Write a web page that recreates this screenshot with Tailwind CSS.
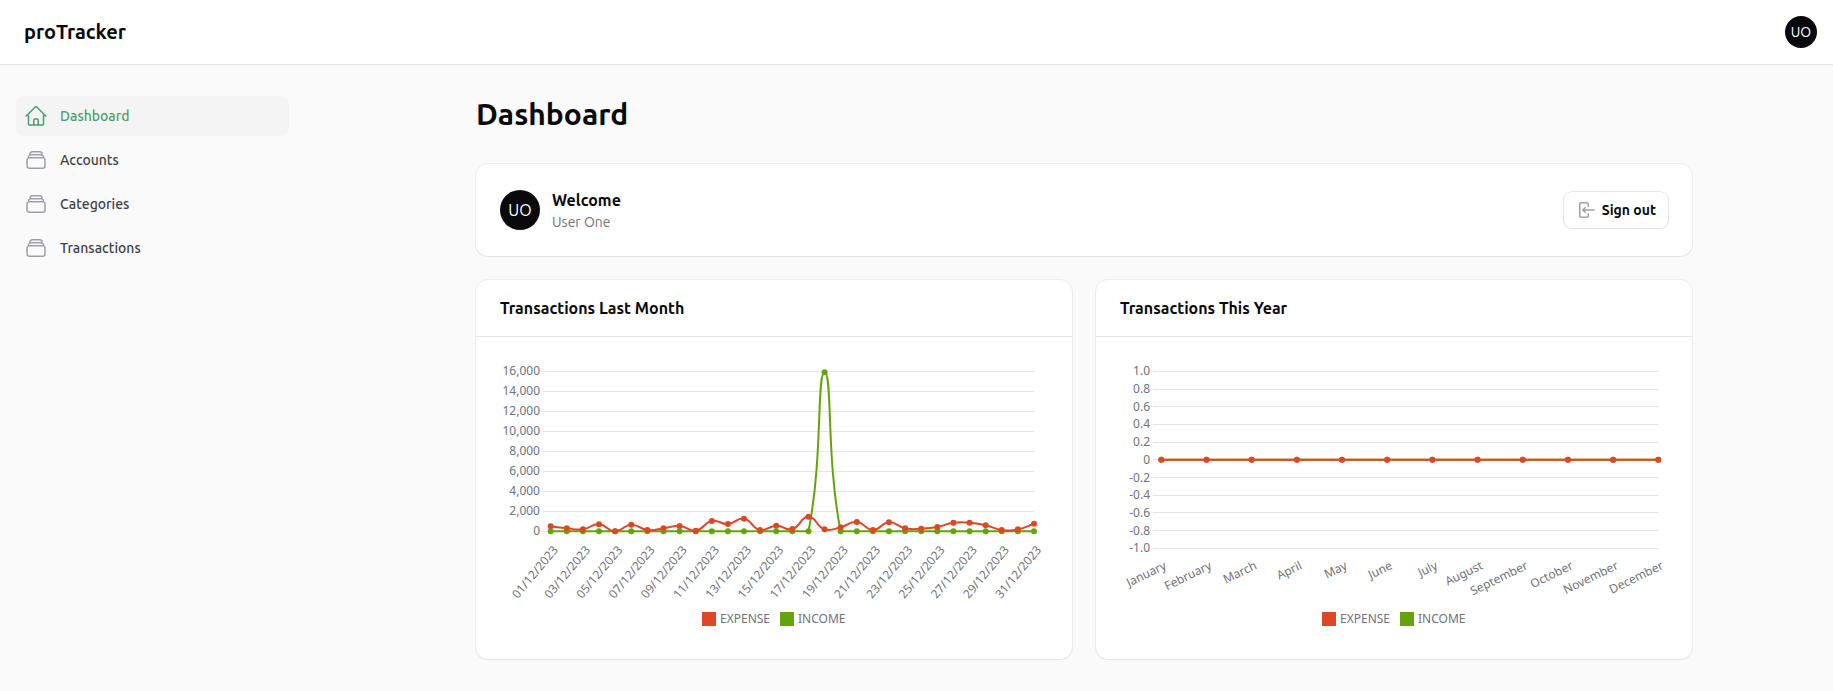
<!DOCTYPE html>
<html lang="en">
<head>
<meta charset="utf-8">
<meta name="viewport" content="width=device-width, initial-scale=1">
<title>Dashboard - proTracker</title>
<script src="https://cdn.jsdelivr.net/npm/@tailwindcss/browser@4"></script>
</head>
<body class="min-h-screen bg-zinc-50 font-['Ubuntu','Noto_Sans',sans-serif] text-zinc-950">

<header class="relative flex h-16 items-center justify-between bg-white pr-4 pl-6 shadow-xs ring-1 ring-zinc-950/5">
  <a href="#" class="text-xl font-bold">proTracker</a>
  <button type="button" aria-label="User menu" class="flex size-8 items-center justify-center rounded-full bg-zinc-950 text-sm text-white">UO</button>
</header>

<div class="flex">
  <aside class="w-[335px] shrink-0 py-8 pr-[46px] pl-4">
    <nav aria-label="Main">
      <ul class="flex flex-col gap-1">
        <li><a href="#" aria-current="page" class="flex items-center gap-3 rounded-lg bg-zinc-100 p-2 text-sm leading-6 font-medium text-[#46a06c]">
          <svg class="size-6" viewBox="0 0 24 24" fill="none" stroke="currentColor" stroke-width="1.5" stroke-linecap="round" stroke-linejoin="round"><path d="m2.25 12 8.954-8.955c.44-.439 1.152-.439 1.591 0L21.75 12M4.5 9.75v10.125c0 .621.504 1.125 1.125 1.125H9.75v-4.875c0-.621.504-1.125 1.125-1.125h2.25c.621 0 1.125.504 1.125 1.125V21h4.125c.621 0 1.125-.504 1.125-1.125V9.75M8.25 21h8.25"/></svg>
          Dashboard</a></li>
        <li><a href="#" class="flex items-center gap-3 rounded-lg p-2 text-sm leading-6 font-medium text-zinc-700">
          <svg class="size-6 text-zinc-400" viewBox="0 0 24 24" fill="none" stroke="currentColor" stroke-width="1.5" stroke-linecap="round" stroke-linejoin="round"><path d="M6 6.878V6a2.25 2.25 0 0 1 2.25-2.25h7.5A2.25 2.25 0 0 1 18 6v.878m-12 0c.235-.083.487-.128.75-.128h10.5c.263 0 .515.045.75.128m-12 0A2.25 2.25 0 0 0 4.5 9v.878m13.5-3A2.25 2.25 0 0 1 19.5 9v.878m0 0a2.246 2.246 0 0 0-.75-.128H5.25c-.263 0-.515.045-.75.128m15 0A2.25 2.25 0 0 1 21 12v6a2.25 2.25 0 0 1-2.25 2.25H5.25A2.25 2.25 0 0 1 3 18v-6c0-.98.626-1.813 1.5-2.122"/></svg>
          Accounts</a></li>
        <li><a href="#" class="flex items-center gap-3 rounded-lg p-2 text-sm leading-6 font-medium text-zinc-700">
          <svg class="size-6 text-zinc-400" viewBox="0 0 24 24" fill="none" stroke="currentColor" stroke-width="1.5" stroke-linecap="round" stroke-linejoin="round"><path d="M6 6.878V6a2.25 2.25 0 0 1 2.25-2.25h7.5A2.25 2.25 0 0 1 18 6v.878m-12 0c.235-.083.487-.128.75-.128h10.5c.263 0 .515.045.75.128m-12 0A2.25 2.25 0 0 0 4.5 9v.878m13.5-3A2.25 2.25 0 0 1 19.5 9v.878m0 0a2.246 2.246 0 0 0-.75-.128H5.25c-.263 0-.515.045-.75.128m15 0A2.25 2.25 0 0 1 21 12v6a2.25 2.25 0 0 1-2.25 2.25H5.25A2.25 2.25 0 0 1 3 18v-6c0-.98.626-1.813 1.5-2.122"/></svg>
          Categories</a></li>
        <li><a href="#" class="flex items-center gap-3 rounded-lg p-2 text-sm leading-6 font-medium text-zinc-700">
          <svg class="size-6 text-zinc-400" viewBox="0 0 24 24" fill="none" stroke="currentColor" stroke-width="1.5" stroke-linecap="round" stroke-linejoin="round"><path d="M6 6.878V6a2.25 2.25 0 0 1 2.25-2.25h7.5A2.25 2.25 0 0 1 18 6v.878m-12 0c.235-.083.487-.128.75-.128h10.5c.263 0 .515.045.75.128m-12 0A2.25 2.25 0 0 0 4.5 9v.878m13.5-3A2.25 2.25 0 0 1 19.5 9v.878m0 0a2.246 2.246 0 0 0-.75-.128H5.25c-.263 0-.515.045-.75.128m15 0A2.25 2.25 0 0 1 21 12v6a2.25 2.25 0 0 1-2.25 2.25H5.25A2.25 2.25 0 0 1 3 18v-6c0-.98.626-1.813 1.5-2.122"/></svg>
          Transactions</a></li>
      </ul>
    </nav>
  </aside>

  <main class="mx-auto flex w-full max-w-7xl min-w-0 flex-col gap-8 p-8">
    <h1 class="text-3xl font-bold">Dashboard</h1>

    <div class="grid grid-cols-2 gap-6">
      <section class="col-span-2 flex items-center gap-3 rounded-xl bg-white p-6 shadow-xs ring-1 ring-zinc-950/5">
        <div class="flex size-10 items-center justify-center rounded-full bg-zinc-950 text-base text-white">UO</div>
        <div class="flex-1">
          <h2 class="text-base font-bold">Welcome</h2>
          <p class="text-sm text-zinc-500">User One</p>
        </div>
        <button type="button" class="flex items-center gap-1.5 rounded-lg bg-white px-3 py-2 text-sm font-bold shadow-xs ring-1 ring-zinc-950/10">
          <svg class="size-5 text-zinc-400" viewBox="0 0 20 20" fill="currentColor" fill-rule="evenodd"><path d="M3 4.25A2.25 2.25 0 0 1 5.25 2h5.5A2.25 2.25 0 0 1 13 4.25v2a.75.75 0 0 1-1.5 0v-2a.75.75 0 0 0-.75-.75h-5.5a.75.75 0 0 0-.75.75v11.5c0 .414.336.75.75.75h5.5a.75.75 0 0 0 .75-.75v-2a.75.75 0 0 1 1.5 0v2A2.25 2.25 0 0 1 10.75 18h-5.5A2.25 2.25 0 0 1 3 15.75V4.25Z"/><path d="M19 10a.75.75 0 0 0-.75-.75H8.704l1.048-.943a.75.75 0 1 0-1.004-1.114l-2.5 2.25a.75.75 0 0 0 0 1.114l2.5 2.25a.75.75 0 1 0 1.004-1.114l-1.048-.943h9.546A.75.75 0 0 0 19 10Z"/></svg>
          Sign out
        </button>
      </section>

      <section class="rounded-xl bg-white shadow-xs ring-1 ring-zinc-950/5">
        <h2 class="px-6 py-4 text-base font-bold">Transactions Last Month</h2>
        <div class="border-t border-zinc-200 px-6 pt-6 pb-6">
          <svg id="month-chart" class="block w-full font-['Noto_Sans',sans-serif]" viewBox="0 0 548 274" role="img" aria-label="Transactions last month"></svg>
        </div>
      </section>

      <section class="rounded-xl bg-white shadow-xs ring-1 ring-zinc-950/5">
        <h2 class="px-6 py-4 text-base font-bold">Transactions This Year</h2>
        <div class="border-t border-zinc-200 px-6 pt-6 pb-6">
          <svg id="year-chart" class="block w-full font-['Noto_Sans',sans-serif]" viewBox="0 0 548 274" role="img" aria-label="Transactions this year"></svg>
        </div>
      </section>
    </div>
  </main>
</div>

<script>
const RED = '#dc4725', GREEN = '#65a30d';

function add(svg, name, attrs, text) {
  const el = document.createElementNS('http://www.w3.org/2000/svg', name);
  for (const k in attrs) el.setAttribute(k, attrs[k]);
  if (text !== undefined) el.textContent = text;
  svg.appendChild(el);
  return el;
}

// Smoothed line through the points, control points kept inside the plot area.
function spline(pts, top, bottom) {
  const clamp = y => Math.min(bottom, Math.max(top, y));
  const ctl = pts.map((p, i) => {
    const a = pts[i - 1] || p, b = pts[i + 1] || p;
    const d1 = Math.hypot(p[0] - a[0], p[1] - a[1]), d2 = Math.hypot(b[0] - p[0], b[1] - p[1]);
    const s = d1 + d2, fa = 0.5 * d1 / s, fb = 0.5 * d2 / s;
    return [p[0] - fa * (b[0] - a[0]), clamp(p[1] - fa * (b[1] - a[1])),
            p[0] + fb * (b[0] - a[0]), clamp(p[1] + fb * (b[1] - a[1]))];
  });
  let d = 'M' + pts[0];
  for (let i = 1; i < pts.length; i++)
    d += 'C' + [ctl[i - 1][2], ctl[i - 1][3], ctl[i][0], ctl[i][1], pts[i][0], pts[i][1]].map(n => n.toFixed(2)).join(' ');
  return d;
}

function chart(id, o) {
  const svg = document.getElementById(id);
  const y = v => o.bottom - (v - o.min) / (o.max - o.min) * (o.bottom - o.top);
  const x = i => o.first + i * (o.right - o.first) / (o.count - 1);
  o.ticks.forEach(([v, label]) => {
    add(svg, 'line', {x1: o.left, x2: o.right, y1: Math.floor(y(v)) + 0.5, y2: Math.floor(y(v)) + 0.5, class: 'stroke-zinc-200'});
    add(svg, 'text', {x: o.left - 3, y: Math.round(y(v)) + 4, 'text-anchor': 'end', class: 'fill-zinc-500 text-xs'}, label);
  });
  o.labels.forEach(([i, label]) => {
    add(svg, 'text', {transform: `translate(${x(i) + o.dx} ${o.bottom + o.dy}) rotate(${o.angle})`, 'text-anchor': 'end', class: 'fill-zinc-500 text-xs'}, label);
  });
  o.series.forEach(([color, values]) => {
    const pts = values.map((v, i) => [x(i), y(v)]);
    add(svg, 'path', {d: spline(pts, o.top, o.bottom), fill: 'none', stroke: color, 'stroke-width': 2});
    pts.forEach(p => add(svg, 'circle', {cx: p[0], cy: p[1], r: 3, fill: color}));
  });
  add(svg, 'rect', {x: 202, y: 251, width: 14, height: 14, fill: RED});
  add(svg, 'text', {x: 220, y: 262, class: 'fill-zinc-500 text-xs'}, 'EXPENSE');
  add(svg, 'rect', {x: 280, y: 251, width: 14, height: 14, fill: GREEN});
  add(svg, 'text', {x: 298, y: 262, class: 'fill-zinc-500 text-xs'}, 'INCOME');
}

const days = [];
for (let d = 1; d <= 31; d += 2) days.push([d - 1, String(d).padStart(2, '0') + '/12/2023']);
const monthTicks = [];
for (let v = 0; v <= 16000; v += 2000) monthTicks.push([v, v.toLocaleString('en-US')]);

chart('month-chart', {
  left: 43, first: 50.7, right: 534, top: 10.3, bottom: 170.3, min: 0, max: 16000, count: 31,
  ticks: monthTicks, labels: days, angle: -50, dx: 8, dy: 19,
  series: [
    [GREEN, Array.from({length: 31}, (_, i) => i === 17 ? 15900 : 0)],
    [RED, [500,300,200,700,0,660,130,300,530,60,1030,730,1260,130,560,230,1460,200,400,930,130,900,300,260,430,860,860,600,130,200,760]]
  ]
});

const yearTicks = [];
for (let v = -10; v <= 10; v += 2) yearTicks.push([v / 10, v === 0 ? '0' : (v / 10).toFixed(1)]);
chart('year-chart', {
  left: 33, first: 41.3, right: 538.3, top: 10.3, bottom: 187.3, min: -1, max: 1, count: 12,
  ticks: yearTicks, angle: -26, dx: 6, dy: 20,
  labels: ['January','February','March','April','May','June','July','August','September','October','November','December'].map((m, i) => [i, m]),
  series: [[GREEN, Array(12).fill(0)], [RED, Array(12).fill(0)]]
});
</script>
</body>
</html>
